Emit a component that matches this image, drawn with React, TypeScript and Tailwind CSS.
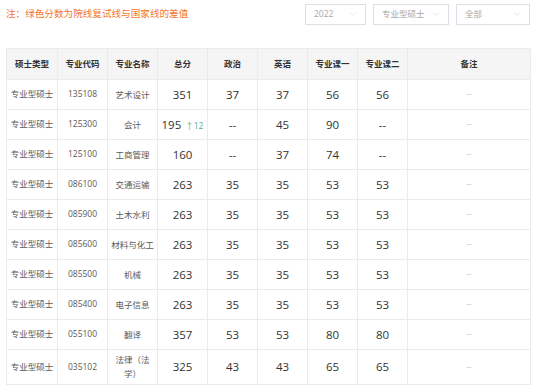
import { ChevronDown } from 'lucide-react';

// 分数线数据
const rows = [
  { type: '专业型硕士', code: '135108', name: '艺术设计', total: '351', diff: '', zz: '37', yy: '37', k1: '56', k2: '56' },
  { type: '专业型硕士', code: '125300', name: '会计', total: '195', diff: '↑12', zz: '--', yy: '45', k1: '90', k2: '--' },
  { type: '专业型硕士', code: '125100', name: '工商管理', total: '160', diff: '', zz: '--', yy: '37', k1: '74', k2: '--' },
  { type: '专业型硕士', code: '086100', name: '交通运输', total: '263', diff: '', zz: '35', yy: '35', k1: '53', k2: '53' },
  { type: '专业型硕士', code: '085900', name: '土木水利', total: '263', diff: '', zz: '35', yy: '35', k1: '53', k2: '53' },
  { type: '专业型硕士', code: '085600', name: '材料与化工', total: '263', diff: '', zz: '35', yy: '35', k1: '53', k2: '53' },
  { type: '专业型硕士', code: '085500', name: '机械', total: '263', diff: '', zz: '35', yy: '35', k1: '53', k2: '53' },
  { type: '专业型硕士', code: '085400', name: '电子信息', total: '263', diff: '', zz: '35', yy: '35', k1: '53', k2: '53' },
  { type: '专业型硕士', code: '055100', name: '翻译', total: '357', diff: '', zz: '53', yy: '53', k1: '80', k2: '80' },
  { type: '专业型硕士', code: '035102', name: '法律（法学）', total: '325', diff: '', zz: '43', yy: '43', k1: '65', k2: '65' },
];

const heads = ['硕士类型', '专业代码', '专业名称', '总分', '政治', '英语', '专业课一', '专业课二', '备注'];
const widths = ['w-[51px]', 'w-[50px]', 'w-[50px]', 'w-[50px]', 'w-[50px]', 'w-[50px]', 'w-[50px]', 'w-[50px]', 'w-[123px]'];

function Select({ label, width }: { label: string; width: string }) {
  return (
    <div className={`${width} h-[21px] border border-[#dcdfe6] bg-white flex items-center justify-between pl-[8px] pr-[7px]`}>
      <span className="text-[8.5px] text-[#a8a8a8]">{label}</span>
      <ChevronDown size={10} strokeWidth={1} className="text-[#c0c4cc]" />
    </div>
  );
}

export default function App() {
  const cell = 'border border-[#ebebeb] text-center align-middle p-0';
  const score = `${cell} text-[11.5px] text-[#333]`;

  return (
    <div
      className="w-[538px] h-[390px] bg-white overflow-hidden"
      style={{ fontFamily: '"Open Sans", "Noto Sans CJK SC", sans-serif' }}
    >
      {/* 顶部说明与筛选 */}
      <div className="flex items-center h-[27px] pl-[6px] pr-[8px] pt-[1px]">
        <p className="text-[9.6px] text-[#f5752a] flex-1">注：绿色分数为院线复试线与国家线的差值</p>
        <div className="flex gap-[7px]">
          <Select label="2022" width="w-[61px]" />
          <Select label="专业型硕士" width="w-[76px]" />
          <Select label="全部" width="w-[74px]" />
        </div>
      </div>

      {/* 表格 */}
      <div className="pl-[6px] pt-[21px]">
        <table className="table-fixed border-collapse w-[524px]">
          <thead>
            <tr className="h-[31px] bg-[#f5f5f5]">
              {heads.map((h, i) => (
                <th key={h} className={`${cell} ${widths[i]} text-[8.5px] font-bold text-[#333]`}>{h}</th>
              ))}
            </tr>
          </thead>
          <tbody>
            {rows.map((r) => (
              <tr key={r.code} className="h-[30px]">
                <td className={`${cell} text-[8.5px] text-[#5a5a5a]`}>{r.type}</td>
                <td className={`${cell} text-[8.5px] text-[#5a5a5a]`}>{r.code}</td>
                <td className={`${cell} text-[8.5px] text-[#5a5a5a] px-[3px] leading-[14px] py-[3px]`}>{r.name}</td>
                <td className={score}>
                  {r.total}
                  {r.diff && <span className="text-[8.5px] text-[#5cae7f] ml-[4px]">{r.diff}</span>}
                </td>
                <td className={score}>{r.zz}</td>
                <td className={score}>{r.yy}</td>
                <td className={score}>{r.k1}</td>
                <td className={score}>{r.k2}</td>
                <td className={`${cell} text-[7px] text-[#aaa]`}>--</td>
              </tr>
            ))}
          </tbody>
        </table>
      </div>
    </div>
  );
}
